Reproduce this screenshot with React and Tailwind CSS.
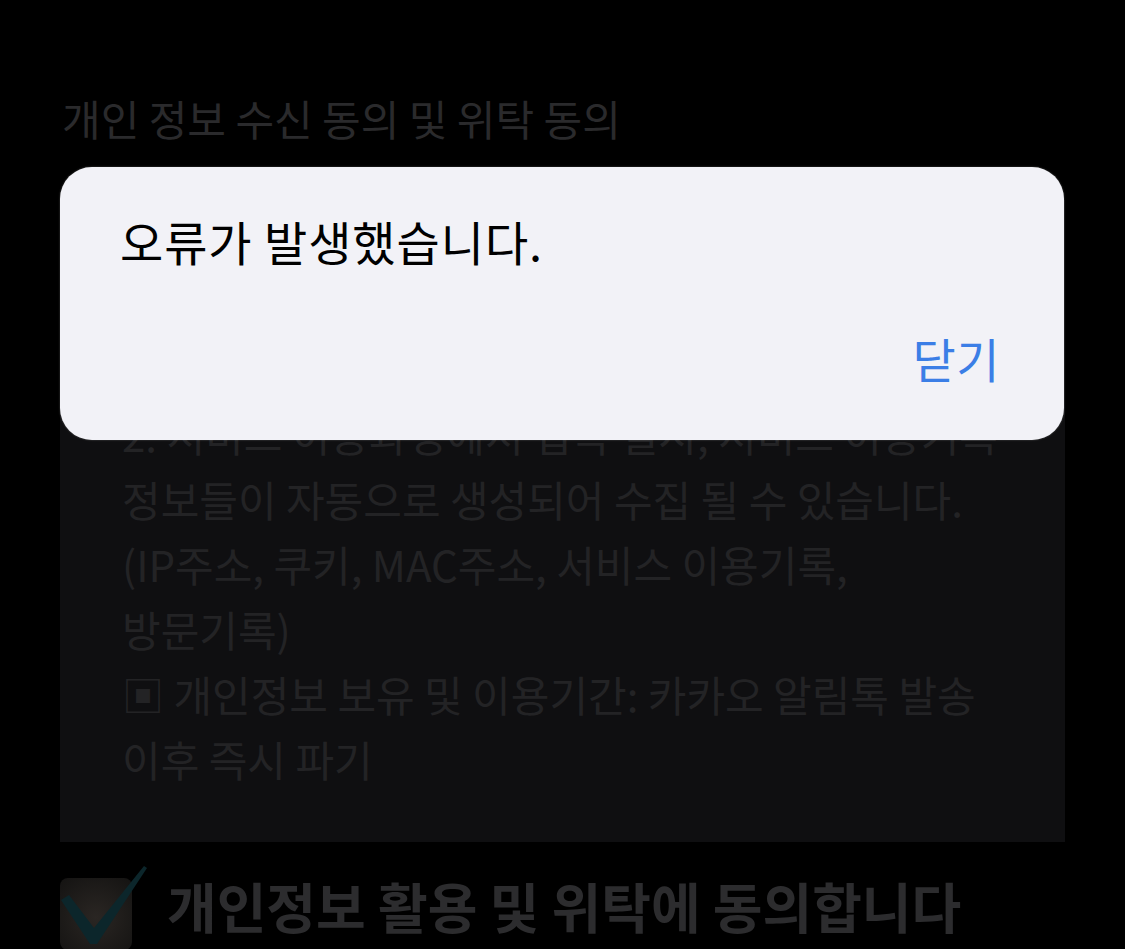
import { useState } from 'react';

const BODY_LINES = [
  '■ 수집 항목: 이름, 휴대폰번호',
  '■ 수집 및 이용목적: 카카오 알림톡 발송',
  '1. 카카오 알림톡 발송을 위한 최소한의 정보',
  '2. 서비스 이용과정에서 접속 일시, 서비스 이용기록',
  '정보들이 자동으로 생성되어 수집 될 수 있습니다.',
  '(IP주소, 쿠키, MAC주소, 서비스 이용기록,',
  '방문기록)',
  '▣ 개인정보 보유 및 이용기간: 카카오 알림톡 발송',
  '이후 즉시 파기',
];

/** 체크박스 (어두운 배경 위 체크 표시) */
function CheckBox() {
  return (
    <div className="relative h-[72px] w-[72px] shrink-0 rounded-[8px] bg-[radial-gradient(circle_at_50%_55%,#2a2623,#141312)]">
      <svg
        className="absolute left-0 top-[-14px] overflow-visible"
        width="90"
        height="90"
        viewBox="0 -14 90 90"
        aria-hidden
      >
        <polygon points="1,22 9,17 34,50 84,-12 87,-10 37,66 30,66" fill="#0c262b" />
      </svg>
    </div>
  );
}

function ErrorDialog({ onClose }) {
  return (
    <div className="absolute left-[60px] top-[167px] flex h-[273px] w-[1004px] flex-col rounded-[32px] bg-[#f2f2f7] pb-[54px] pt-[46px] shadow-[0_0_2px_rgba(255,255,255,0.3)]">
      <p className="pl-[60px] text-[47px] leading-[56px] tracking-[0.02em] text-black">오류가 발생했습니다.</p>
      <button
        type="button"
        onClick={onClose}
        className="mt-[61px] self-end pr-[64px] text-[47px] leading-[56px] tracking-[0.01em] text-[#3b7ee6]"
      >
        닫기
      </button>
    </div>
  );
}

export default function App() {
  const [open, setOpen] = useState(true);

  return (
    <div className="relative h-[949px] overflow-hidden bg-black font-['Noto_Sans_CJK_KR','Noto_Sans',sans-serif]">
      <div className="px-[60px] pt-[92px]">
        <h2 className="pl-[2px] text-[42px] leading-[52px] text-[#2a2a2c]">
          개인 정보 수신 동의 및 위탁 동의
        </h2>

        <div className="mt-[56px] bg-[#0f0f11] px-[62px] pb-[51px] pt-[6px] text-[42px] leading-[65px] text-[#232325]">
          {BODY_LINES.map((line, i) => (
            <p key={i} className="whitespace-nowrap">
              {line}
            </p>
          ))}
        </div>

        <div className="mt-[36px] flex items-start gap-[35px]">
          <CheckBox />
          <span className="-mt-[2px] whitespace-nowrap text-[54px] font-bold leading-[60px] text-[#2c2c2e]">
            개인정보 활용 및 위탁에 동의합니다
          </span>
        </div>
      </div>

      {open && <ErrorDialog onClose={() => setOpen(false)} />}
    </div>
  );
}
